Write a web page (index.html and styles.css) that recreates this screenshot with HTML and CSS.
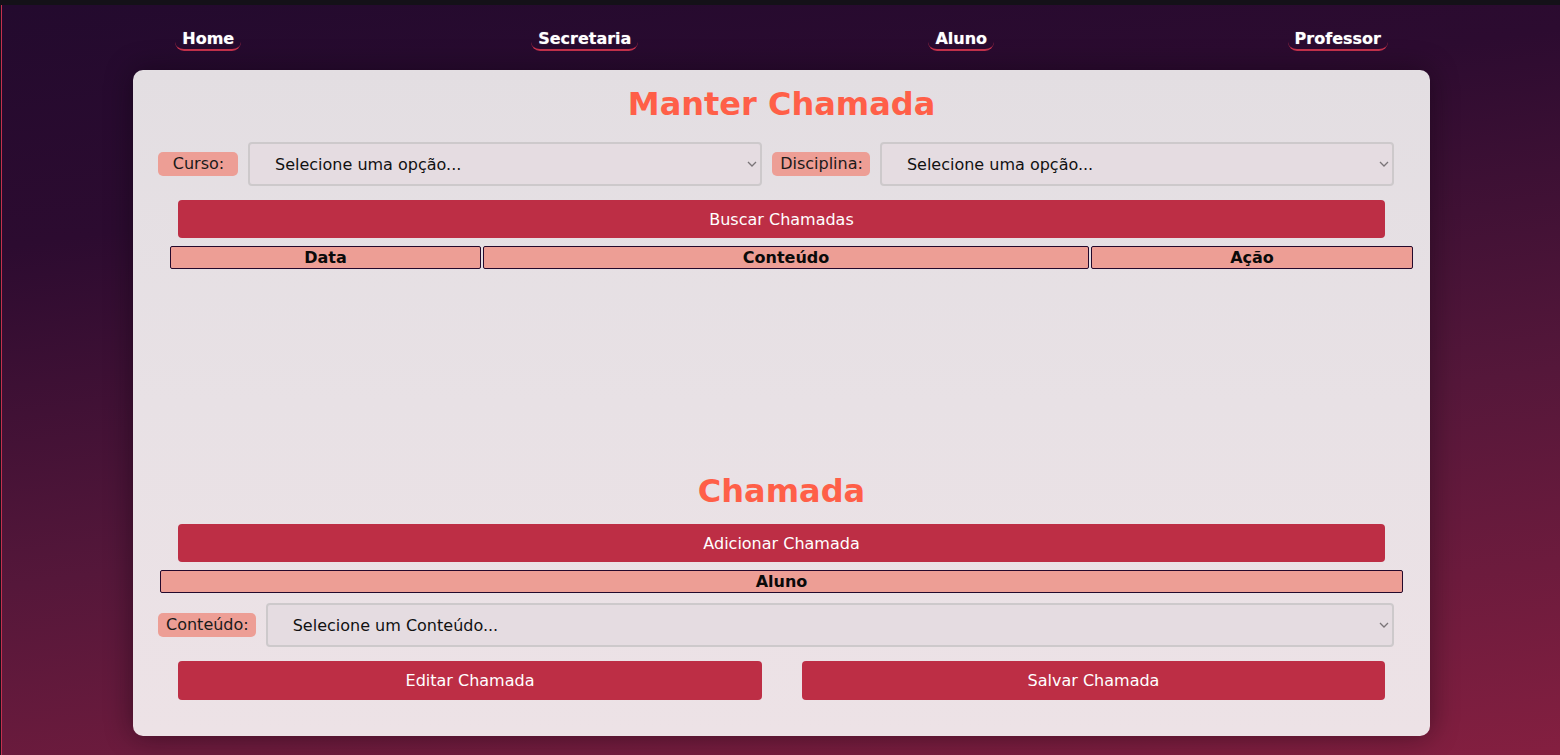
FILE: index.html
```html
<!DOCTYPE html>
<html lang="pt-BR">
<head>
<meta charset="utf-8">
<title>Manter Chamada</title>
<link rel="stylesheet" href="styles.css">
</head>
<body>
<div class="topstrip"></div>
<div class="page">
  <nav class="nav">
    <div class="nav-cell"><a class="nav-link" href="#">Home</a></div>
    <div class="nav-cell"><a class="nav-link" href="#">Secretaria</a></div>
    <div class="nav-cell"><a class="nav-link" href="#">Aluno</a></div>
    <div class="nav-cell"><a class="nav-link" href="#">Professor</a></div>
  </nav>
  <main class="card">
    <h1 class="title">Manter Chamada</h1>
    <div class="field-row">
      <label class="tag">Curso:</label>
      <div class="select-wrap">
        <select class="select"><option>Selecione uma opção...</option></select>
        <svg class="chev" width="10" height="6" viewBox="0 0 10 6"><path d="M1 1 L5 5 L9 1" fill="none" stroke="#7a7478" stroke-width="1.3"/></svg>
      </div>
      <label class="tag">Disciplina:</label>
      <div class="select-wrap">
        <select class="select"><option>Selecione uma opção...</option></select>
        <svg class="chev" width="10" height="6" viewBox="0 0 10 6"><path d="M1 1 L5 5 L9 1" fill="none" stroke="#7a7478" stroke-width="1.3"/></svg>
      </div>
    </div>
    <button class="btn btn-wide">Buscar Chamadas</button>
    <div class="list-area">
      <table class="grid grid-shift">
        <thead>
          <tr>
            <th class="col-data">Data</th>
            <th class="col-conteudo">Conteúdo</th>
            <th class="col-acao">Ação</th>
          </tr>
        </thead>
        <tbody></tbody>
      </table>
    </div>
    <h1 class="title">Chamada</h1>
    <button class="btn btn-wide">Adicionar Chamada</button>
    <table class="grid">
      <thead>
        <tr><th class="col-aluno">Aluno</th></tr>
      </thead>
      <tbody></tbody>
    </table>
    <div class="field-row field-row-2">
      <label class="tag">Conteúdo:</label>
      <div class="select-wrap">
        <select class="select"><option>Selecione um Conteúdo...</option></select>
        <svg class="chev" width="10" height="6" viewBox="0 0 10 6"><path d="M1 1 L5 5 L9 1" fill="none" stroke="#7a7478" stroke-width="1.3"/></svg>
      </div>
    </div>
    <div class="btn-pair">
      <button class="btn">Editar Chamada</button>
      <button class="btn">Salvar Chamada</button>
    </div>
  </main>
</div>
</body>
</html>
```

FILE: styles.css
```css
html, body {
  margin: 0;
  padding: 0;
}

body {
  background: #15111b;
  font-family: "DejaVu Sans", Verdana, sans-serif;
  font-size: 16px;
  padding-left: 1px;
  overflow: hidden;
}

.topstrip {
  height: 5px;
  margin-left: -1px;
  background: #141118;
}

.page {
  height: 750px;
  border-left: 1px solid #c4304e;
  background: linear-gradient(172deg, #230a2e 0%, #2c0b30 25%, #55173a 60%, #841f40 100%);
  padding-top: 24px;
  box-sizing: border-box;
}

.nav {
  display: grid;
  grid-template-columns: repeat(4, 376.5px);
  margin-left: 18px;
}

.nav-cell {
  display: flex;
  justify-content: center;
}

.nav-link {
  display: block;
  color: #ffffff;
  font-weight: bold;
  font-size: 16px;
  line-height: 19px;
  text-decoration: none;
  padding: 0 7px 1px;
  border-bottom: 2px solid #c0304a;
  border-radius: 9px;
  text-shadow: 0 0 1px rgba(255, 255, 255, 0.5);
}

.card {
  display: block;
  width: 1297px;
  margin: 19px 0 0 131px;
  box-sizing: border-box;
  padding: 16px 36px 36px 25px;
  border-radius: 10px;
  background: linear-gradient(180deg, #e3dee2 0%, #e8e1e5 50%, #ede2e6 100%);
  box-shadow: 0 0 28px rgba(10, 0, 10, 0.45);
}

.title {
  margin: 0;
  text-align: center;
  color: #ff5f48;
  font-size: 32px;
  font-weight: bold;
  line-height: 37px;
  padding-left: 11px;
}

.field-row {
  display: flex;
  align-items: center;
  gap: 10px;
  margin-top: 19px;
}

.field-row-2 {
  margin-top: 8px;
}

.tag {
  background: #ed9e95;
  color: #1a1a1a;
  border-radius: 5px;
  padding: 3px 7px 3px 8px;
  min-width: 65px;
  text-align: center;
  line-height: 18px;
  font-size: 16px;
  white-space: nowrap;
}

.select-wrap {
  position: relative;
  flex: 1;
  min-width: 0;
  display: flex;
}

.select {
  flex: 1;
  min-width: 0;
  height: 44px;
  box-sizing: border-box;
  border: 2px solid #cdc9cb;
  border-radius: 4px;
  background: #e5dce1;
  color: #111;
  font-family: "DejaVu Sans", Verdana, sans-serif;
  font-size: 16px;
  padding: 0 24px 0 25px;
  appearance: none;
  -webkit-appearance: none;
}

.chev {
  position: absolute;
  right: 5px;
  top: 19px;
  pointer-events: none;
}

.btn {
  display: block;
  height: 38px;
  border: none;
  border-radius: 4px;
  background: #bd2e45;
  color: #ffffff;
  font-family: "DejaVu Sans", Verdana, sans-serif;
  font-size: 16px;
  cursor: pointer;
}

.btn-wide {
  width: 1207px;
  margin: 14px 0 0 20px;
}

.list-area {
  height: 229px;
  margin-top: 6px;
}

.grid {
  width: 1247px;
  table-layout: fixed;
  border-spacing: 2px;
  margin-top: 6px;
}

.grid-shift {
  margin: 0 0 0 10px;
}

.grid th {
  background: #ed9e95;
  border: 1px solid #24092c;
  border-radius: 2px;
  padding: 1px 0;
  font-size: 16px;
  font-weight: bold;
  line-height: 19px;
  color: #0a0a0a;
  text-align: center;
}

.col-data { width: 309px; }
.col-conteudo { width: 604px; }
.col-acao { width: 320px; }

.btn-pair {
  display: grid;
  grid-template-columns: 584px 583px;
  gap: 40px;
  margin: 14px 0 0 20px;
}

.btn-pair .btn {
  width: 100%;
  height: 39px;
}
```
